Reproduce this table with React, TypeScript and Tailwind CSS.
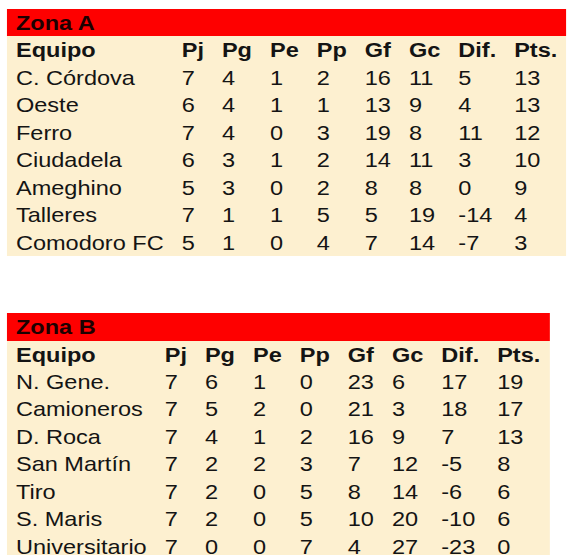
import React from "react";

type Row = (string | number)[];

const headers = ["Equipo", "Pj", "Pg", "Pe", "Pp", "Gf", "Gc", "Dif.", "Pts."];

const zonaA: Row[] = [
  ["C. Córdova", 7, 4, 1, 2, 16, 11, 5, 13],
  ["Oeste", 6, 4, 1, 1, 13, 9, 4, 13],
  ["Ferro", 7, 4, 0, 3, 19, 8, 11, 12],
  ["Ciudadela", 6, 3, 1, 2, 14, 11, 3, 10],
  ["Ameghino", 5, 3, 0, 2, 8, 8, 0, 9],
  ["Talleres", 7, 1, 1, 5, 5, 19, -14, 4],
  ["Comodoro FC", 5, 1, 0, 4, 7, 14, -7, 3],
];

const zonaB: Row[] = [
  ["N. Gene.", 7, 6, 1, 0, 23, 6, 17, 19],
  ["Camioneros", 7, 5, 2, 0, 21, 3, 18, 17],
  ["D. Roca", 7, 4, 1, 2, 16, 9, 7, 13],
  ["San Martín", 7, 2, 2, 3, 7, 12, -5, 8],
  ["Tiro", 7, 2, 0, 5, 8, 14, -6, 6],
  ["S. Maris", 7, 2, 0, 5, 10, 20, -10, 6],
  ["Universitario", 7, 0, 0, 7, 4, 27, -23, 0],
];

function Zone({ title, rows }: { title: string; rows: Row[] }) {
  return (
    <table className="border-collapse bg-[#fdf0d0] text-[#141414]">
      <thead>
        <tr className="h-[27.45px]">
          <th
            colSpan={9}
            className="bg-[#fe0000] text-left font-bold text-[#1c0000] px-[7.76px] pt-[2px] leading-[25.45px] whitespace-nowrap"
          >
            {title}
          </th>
        </tr>
        <tr className="h-[27.45px]">
          {headers.map((h) => (
            <th
              key={h}
              className="text-left font-bold px-[7.76px] pt-[2px] leading-[25.45px] whitespace-nowrap"
            >
              {h}
            </th>
          ))}
        </tr>
      </thead>
      <tbody>
        {rows.map((r, i) => (
          <tr key={i} className="h-[27.45px]">
            {r.map((c, j) => (
              <td
                key={j}
                className="text-left font-normal px-[7.76px] pt-[2px] leading-[25.45px] whitespace-nowrap"
              >
                {c}
              </td>
            ))}
          </tr>
        ))}
      </tbody>
    </table>
  );
}

export default function App() {
  return (
    <div className="w-[576px] h-[555px] overflow-hidden bg-white">
      <div
        className="origin-top-left scale-x-[1.16] pt-[9px] pl-[6px] flex flex-col items-start gap-[57px] text-[20.3px]"
        style={{ fontFamily: '"Liberation Sans", Arial, sans-serif' }}
      >
        <Zone title="Zona A" rows={zonaA} />
        <Zone title="Zona B" rows={zonaB} />
      </div>
    </div>
  );
}
